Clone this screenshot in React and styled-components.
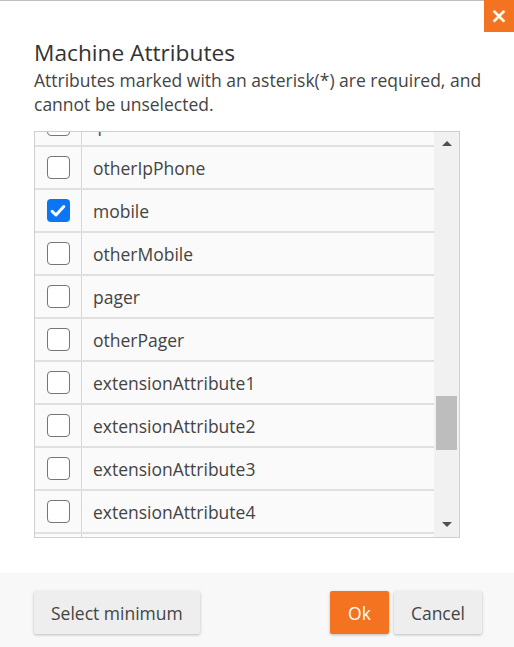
import { useLayoutEffect, useRef, useState } from "react";
import styled, { createGlobalStyle } from "styled-components";

const ATTRIBUTES = [
  "telephoneNumber",
  "otherTelephone",
  "homePhone",
  "otherHomePhone",
  "ipPhone",
  "otherIpPhone",
  "mobile",
  "otherMobile",
  "pager",
  "otherPager",
  "extensionAttribute1",
  "extensionAttribute2",
  "extensionAttribute3",
  "extensionAttribute4",
  "extensionAttribute5",
  "extensionAttribute6",
  "extensionAttribute7",
];

const ORANGE = "#f47321";

const GlobalStyle = createGlobalStyle`
  html, body {
    margin: 0;
    padding: 0;
    background: #ffffff;
    font-family: "Open Sans", "Noto Sans", sans-serif;
  }
`;

function CheckMark() {
  return (
    <svg width="16" height="14" viewBox="0 0 16 14">
      <path
        d="M2.2 7.4 L6 11 L13.8 2.6"
        fill="none"
        stroke="#fff"
        strokeWidth="3"
        strokeLinecap="round"
        strokeLinejoin="round"
      />
    </svg>
  );
}

export default function App() {
  const [selected, setSelected] = useState({ mobile: true });
  const viewRef = useRef(null);

  useLayoutEffect(() => {
    if (viewRef.current) viewRef.current.scrollTop = 200;
  }, []);

  const toggle = (name) =>
    setSelected((s) => ({ ...s, [name]: !s[name] }));

  return (
    <Dialog>
      <GlobalStyle />
      <TopBar>
        <CloseButton aria-label="close">×</CloseButton>
      </TopBar>
      <Body>
        <Title>Machine Attributes</Title>
        <Hint>
          Attributes marked with an asterisk(*) are required, and cannot be
          unselected.
        </Hint>
        <ListBox>
          <Viewport ref={viewRef}>
            {ATTRIBUTES.map((name) => (
              <Row key={name} onClick={() => toggle(name)}>
                <CheckCell>
                  <Box $checked={!!selected[name]}>
                    {selected[name] && <CheckMark />}
                  </Box>
                </CheckCell>
                <Label>{name}</Label>
              </Row>
            ))}
          </Viewport>
          <ScrollBar>
            <Arrow $up />
            <Track>
              <Thumb />
            </Track>
            <Arrow />
          </ScrollBar>
        </ListBox>
      </Body>
      <Footer>
        <Button>Select minimum</Button>
        <Actions>
          <Button $primary>Ok</Button>
          <Button>Cancel</Button>
        </Actions>
      </Footer>
    </Dialog>
  );
}

const Dialog = styled.div`
  width: 514px;
  height: 647px;
  display: flex;
  flex-direction: column;
  overflow: hidden;
`;

const TopBar = styled.div`
  display: flex;
  justify-content: flex-end;
  border-top: 1px solid #bdbdbd;
  height: 31px;
`;

const CloseButton = styled.button`
  width: 30px;
  height: 32px;
  margin-top: -1px;
  border: none;
  padding: 0;
  background: ${ORANGE};
  color: #fff;
  font-family: "DejaVu Sans", sans-serif;
  font-size: 21px;
  font-weight: bold;
  line-height: 30px;
  cursor: pointer;
`;

const Body = styled.div`
  padding: 6px 20px 0 34px;
  flex: 1;
`;

const Title = styled.h1`
  margin: 0;
  font-size: 22.7px;
  font-weight: 400;
  line-height: 30px;
  color: #333;
`;

const Hint = styled.p`
  margin: 0;
  font-size: 17.5px;
  line-height: 24px;
  color: #444;
`;

const ListBox = styled.div`
  margin-top: 15px;
  width: 426px;
  height: 407px;
  box-sizing: border-box;
  border: 1px solid #cfcfcf;
  display: flex;
  background: #fafafa;
`;

const Viewport = styled.div`
  flex: 1;
  overflow: hidden;
`;

const Row = styled.div`
  display: flex;
  align-items: stretch;
  height: 43px;
  box-sizing: border-box;
  border-bottom: 2px solid #e0e0e0;
  cursor: pointer;
`;

const CheckCell = styled.div`
  width: 46px;
  flex-shrink: 0;
  display: flex;
  align-items: center;
  justify-content: center;
  border-right: 1px solid #d6d6d6;
`;

const Box = styled.span`
  width: 23px;
  height: 23px;
  box-sizing: border-box;
  border-radius: 4px;
  display: flex;
  align-items: center;
  justify-content: center;
  background: ${(p) => (p.$checked ? "#0b76f5" : "#fff")};
  border: ${(p) => (p.$checked ? "none" : "1px solid #767676")};
`;

const Label = styled.span`
  display: flex;
  align-items: center;
  padding-left: 11px;
  font-size: 17.5px;
  color: #444;
`;

const ScrollBar = styled.div`
  width: 25px;
  flex-shrink: 0;
  background: #f1f1f1;
  display: flex;
  flex-direction: column;
  align-items: center;
`;

const Arrow = styled.span`
  width: 0;
  height: 0;
  margin: ${(p) => (p.$up ? "9px 0 6px" : "6px 0 10px")};
  border-left: 5px solid transparent;
  border-right: 5px solid transparent;
  ${(p) =>
    p.$up
      ? "border-bottom: 5px solid #505050;"
      : "border-top: 5px solid #505050;"}
`;

const Track = styled.div`
  flex: 1;
  width: 100%;
  display: flex;
  flex-direction: column;
  justify-content: flex-end;
  padding: 0 2px 66px;
  box-sizing: border-box;
`;

const Thumb = styled.div`
  height: 54px;
  background: #bdbdbd;
`;

const Footer = styled.div`
  margin-top: 35px;
  height: 74px;
  flex-shrink: 0;
  background: #f8f8f8;
  display: flex;
  justify-content: space-between;
  align-items: flex-start;
  padding: 18px 32px 0 34px;
  box-sizing: border-box;
`;

const Actions = styled.div`
  display: flex;
  gap: 5px;
`;

const Button = styled.button`
  height: 43px;
  padding: 0 ${(p) => (p.$primary ? "18px" : "17px")};
  border: none;
  border-radius: 2px;
  font-family: "Open Sans", "Noto Sans", sans-serif;
  font-size: 17.5px;
  color: ${(p) => (p.$primary ? "#fff" : "#444")};
  background: ${(p) => (p.$primary ? ORANGE : "#eeeeee")};
  box-shadow: 0 1px 3px rgba(0, 0, 0, 0.25);
  cursor: pointer;
`;
